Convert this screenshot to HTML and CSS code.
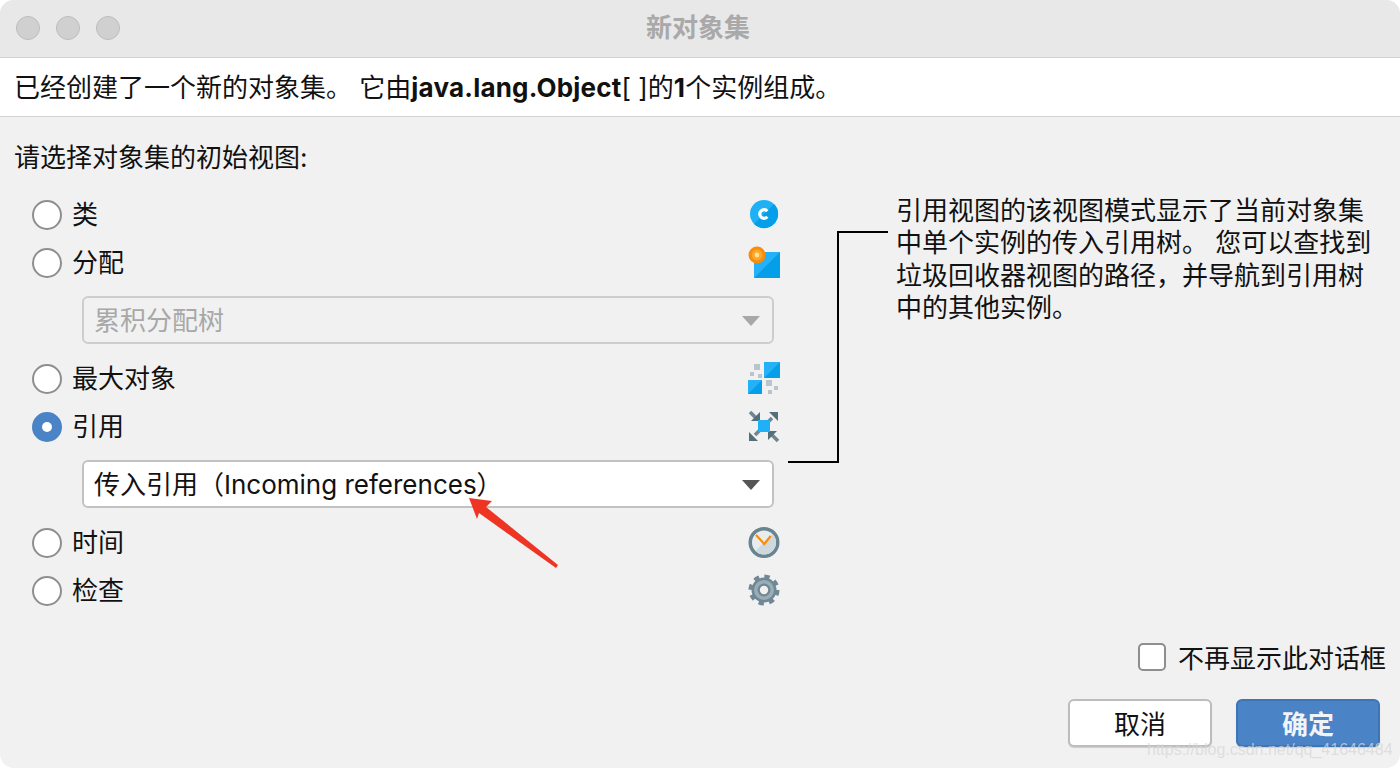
FILE: index.html
```html
<!DOCTYPE html>
<html lang="zh">
<head>
<meta charset="utf-8">
<title>新对象集</title>
<link rel="stylesheet" href="styles.css">
</head>
<body>
<div class="window">
  <header class="titlebar">
    <div class="lights"><span class="light"></span><span class="light"></span><span class="light"></span></div>
    <div class="title">新对象集</div>
  </header>
  <div class="banner">已经创建了一个新的对象集。 它由<b>java.lang.Object</b>[ ]的<b>1</b>个实例组成。</div>
  <main class="content">
    <div class="prompt">请选择对象集的初始视图:</div>
    <div class="columns">
      <div class="options">
        <div class="row"><span class="radio"></span><span class="label">类</span>
          <svg class="icon" viewBox="0 0 32 32"><circle cx="16" cy="15" r="14" fill="#1fb0f5"/><path d="M26 5A14 14 0 0 1 6 25Z" fill="#049fe8"/><path d="M19.300 12.200A4.300 4.300 0 1 0 19.300 17.800" fill="none" stroke="#fff" stroke-width="3.200"/></svg>
        </div>
        <div class="row"><span class="radio"></span><span class="label">分配</span>
          <svg class="icon" viewBox="0 0 32 32"><rect x="6" y="5" width="26" height="26" fill="#25b1f7"/><path d="M32 5V31H6Z" fill="#049fe8"/><circle cx="9" cy="8" r="8.500" fill="#f98c0a"/><circle cx="9" cy="8" r="5.400" fill="#fba82e"/><circle cx="9" cy="8" r="2.400" fill="#ffe28a"/></svg>
        </div>
        <div class="select disabled"><span>累积分配树</span><i class="caret"></i></div>
        <div class="row"><span class="radio"></span><span class="label">最大对象</span>
          <svg class="icon" viewBox="0 0 32 32"><rect x="16" y="-1" width="16" height="16" fill="#25b1f7"/><path d="M32 -1V15H16Z" fill="#049fe8"/><rect y="17" width="14" height="14" fill="#25b1f7"/><path d="M14 17V31H0Z" fill="#049fe8"/><g fill="#b9c4cb"><rect x="6" y="1" width="6" height="6"/><rect x="2" y="9" width="4" height="4"/><rect x="10" y="11" width="4" height="4"/><rect x="18" y="17" width="6" height="6"/><rect x="26" y="23" width="4" height="4"/><rect x="20" y="27" width="4" height="4"/></g></svg>
        </div>
        <div class="row"><span class="radio checked"></span><span class="label">引用</span>
          <svg class="icon" viewBox="0 0 32 32"><g fill="none" stroke="#6d8692" stroke-width="3.600"><path d="M2 1 9 8"/><path d="M24 7 18 13"/><path d="M7 24 13 18"/><path d="M30 30 23 23"/></g><g fill="#546e7a"><path d="M12 10H3L12 1Z"/><path d="M30 1H21L30 10Z"/><path d="M1 30V21L10 30Z"/><path d="M20 20H29L20 29Z"/></g><rect x="10" y="9" width="12" height="12" fill="#1fb0f5"/></svg>
        </div>
        <div class="select"><span>传入引用（Incoming references）</span><i class="caret"></i></div>
        <div class="row"><span class="radio"></span><span class="label">时间</span>
          <svg class="icon" viewBox="0 0 32 32"><circle cx="16" cy="15.500" r="15.500" fill="#688490"/><circle cx="16" cy="15.500" r="12" fill="#e8eced"/><path d="M24.500 7A12 12 0 0 1 7.500 24Z" fill="#cfd8dc"/><path d="M8 8 16.300 17 22.700 9" fill="none" stroke="#f98c0a" stroke-width="2.200"/></svg>
        </div>
        <div class="row"><span class="radio"></span><span class="label">检查</span>
          <svg class="icon" viewBox="0 0 32 32"><circle cx="16" cy="15" r="13.500" fill="none" stroke="#6f8896" stroke-width="4" stroke-dasharray="5.300 5.300"/><circle cx="16" cy="15" r="12.500" fill="#6f8896"/><circle cx="16" cy="15" r="10" fill="#9aadb6"/><circle cx="16" cy="15" r="6.500" fill="#6f8896"/><circle cx="16" cy="15" r="4.200" fill="#f1f1f1"/></svg>
        </div>
      </div>
      <p class="description">引用视图的该视图模式显示了当前对象集<br>中单个实例的传入引用树。 您可以查找到<br>垃圾回收器视图的路径，并导航到引用树<br>中的其他实例。</p>
    </div>
    <div class="again"><span class="checkbox"></span><span class="again-text">不再显示此对话框</span></div>
    <div class="actions">
      <button class="btn">取消</button>
      <button class="btn primary">确定</button>
    </div>
  </main>
  <svg class="overlay" viewBox="0 0 1400 768">
    <path d="M788 462H838V232H888" fill="none" stroke="#000" stroke-width="2"/>
    <path d="M469 498 492 501 486 507 558 565 556 568 479 513 477 519Z" fill="#ee3524"/>
  </svg>
  <div class="watermark">https://blog.csdn.net/qq_41646484</div>
</div>
</body>
</html>
```

FILE: styles.css
```css
* { box-sizing: border-box; }
html, body { margin: 0; height: 768px; overflow: hidden; background: #fff; }
body { font-family: "Inter", "Noto Sans CJK SC", sans-serif; font-size: 26px; color: #111; }
.window { position: relative; width: 1400px; height: 768px; background: #f1f1f1; border-radius: 14px; overflow: hidden; display: flex; flex-direction: column; }
.titlebar { height: 58px; flex: none; background: #e8e8e8; border-bottom: 1px solid #d2d2d2; display: flex; justify-content: center; position: relative; }
.lights { position: absolute; left: 16px; top: 16px; display: flex; gap: 16px; }
.light { width: 24px; height: 24px; border-radius: 50%; background: #d0d0d0; border: 1px solid #bdbdbd; }
.title { font-weight: 700; color: #a9a9a9; line-height: 52px; padding-right: 4px; font-family: "Noto Sans CJK SC", sans-serif; }
.banner { height: 59px; flex: none; background: #fff; border-bottom: 1px solid #d2d2d2; padding-left: 14px; line-height: 60px; white-space: nowrap; }
.banner b { font-weight: 700; letter-spacing: .2px; }
.content { flex: 1; padding: 25px 14px 0 14px; display: flex; flex-direction: column; }
.prompt { line-height: 32px; height: 32px; margin-bottom: 17px; }
.columns { display: flex; height: 424px; }
.options { width: 766px; padding-left: 18px; flex: none; }
.row { height: 48px; display: flex; align-items: center; }
.radio { width: 30px; height: 30px; border-radius: 50%; background: #fff; border: 2px solid #8e8e8e; flex: none; position: relative; }
.radio.checked { background: #4a83c6; border-color: #4a83c6; }
.radio.checked::after { content: ""; position: absolute; left: 8px; top: 8px; width: 10px; height: 10px; border-radius: 50%; background: #fff; }
.label { margin-left: 10px; flex: 1; line-height: 32px; }
.icon { width: 32px; height: 32px; flex: none; overflow: visible; }
.select { margin: 9px 0 11px 50px; width: 692px; height: 48px; background: #fff; border: 2px solid #c2c2c2; border-radius: 6px; padding: 0 12px 3px 10px; display: flex; align-items: center; justify-content: space-between; }
.select.disabled { background: #f1f1f1; border-color: #cdcdcd; color: #a8a8a8; }
.caret { width: 0; height: 0; border-left: 9px solid transparent; border-right: 9px solid transparent; border-top: 10px solid #555; margin-top: 5px; }
.disabled .caret { border-top-color: #a8a8a8; }
.description { margin: 4px 0 0 116px; line-height: 32.3px; white-space: nowrap; color: #111; }
.again { margin-top: 26px; height: 32px; display: flex; justify-content: flex-end; align-items: center; gap: 12px; }
.again-text { padding-bottom: 1px; }
.checkbox { width: 28px; height: 28px; background: #fff; border: 2px solid #8e8e8e; border-radius: 5px; }
.actions { margin-top: 26px; padding-right: 6px; display: flex; justify-content: flex-end; gap: 24px; }
.btn { width: 144px; height: 48px; padding: 0 0 2px; border-radius: 6px; border: 2px solid #bdbdbd; background: #fff; color: #111; font: inherit; box-shadow: 0 1px 1px rgba(0,0,0,.15); }
.btn.primary { background: #4a83c6; border-color: #3f74b5; color: #f0f4f9; font-weight: 700; }
.overlay { position: absolute; left: 0; top: 0; width: 1400px; height: 768px; pointer-events: none; }
.watermark { position: absolute; left: 1147px; top: 739px; font: 16px/22px "Liberation Sans", sans-serif; color: rgba(215,215,215,.75); white-space: nowrap; }
```
